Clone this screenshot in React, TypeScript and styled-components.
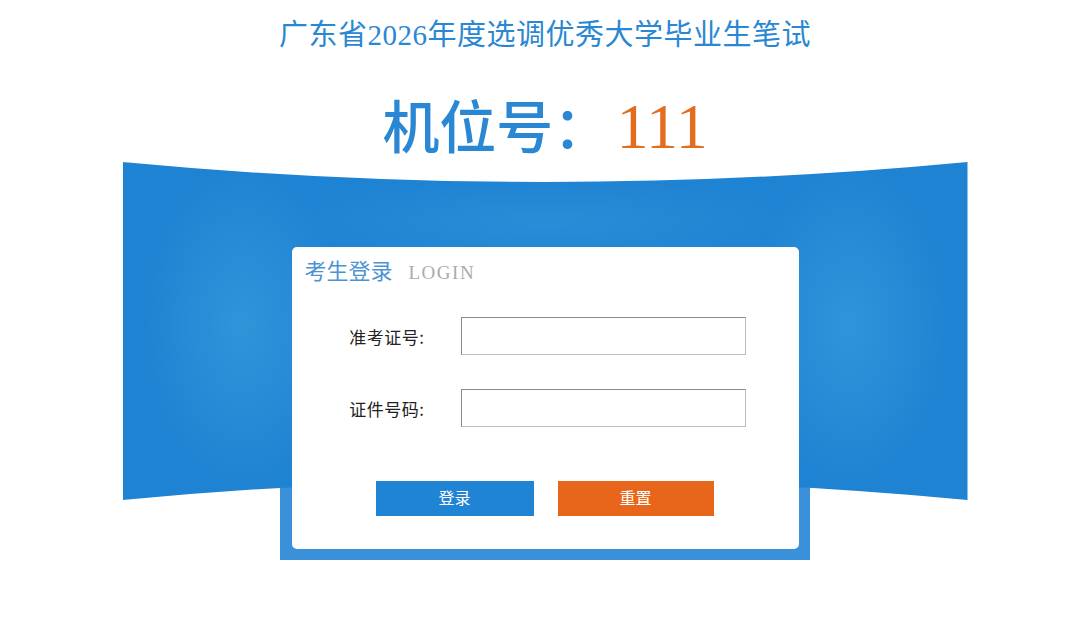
import React from "react";
import styled, { createGlobalStyle } from "styled-components";

const GlobalStyle = createGlobalStyle`
    html, body {
        margin: 0;
        padding: 0;
        background: #ffffff;
    }
    body {
        font-family: "Noto Sans CJK SC", "Liberation Sans", sans-serif;
        color: #333;
    }
`

const Page = styled.div`
    width: 1080px;
    padding-left: 10px;
    box-sizing: border-box;
    display: flex;
    flex-direction: column;
    align-items: center;
`

const Title = styled.h1`
    margin: 17px 0 0;
    height: 36px;
    line-height: 36px;
    font-size: 29px;
    font-weight: 400;
    color: #2a87d3;
    font-family: "Liberation Serif", "Noto Sans CJK SC", serif;
    letter-spacing: 0.5px;
`

const SeatLine = styled.div`
    margin-top: 37px;
    height: 70px;
    display: flex;
    align-items: baseline;
    line-height: 66px;
`

const SeatLabel = styled.span`
    font-size: 57px;
    font-weight: 500;
    color: #2a87d3;
    font-family: "Noto Sans CJK SC", sans-serif;
`

const SeatNumber = styled.span`
    margin-left: 6px;
    font-size: 64px;
    color: #e46c1f;
    font-family: "Liberation Serif", serif;
`

// banner, frame and card share one grid cell
const Stage = styled.div`
    width: 845px;
    height: 400px;
    display: grid;
    & > * {
        grid-area: 1 / 1;
    }
`

const Frame = styled.div`
    justify-self: center;
    align-self: end;
    width: 530px;
    height: 324px;
    background: #3a90d9;
`

const Banner = styled.div`
    height: 340px;
    align-self: start;
    background:
        radial-gradient(ellipse 100px 160px at 120px 165px, rgba(70, 170, 226, 0.45), rgba(70, 170, 226, 0) 100%),
        radial-gradient(ellipse 100px 160px at 725px 165px, rgba(70, 170, 226, 0.45), rgba(70, 170, 226, 0) 100%),
        radial-gradient(ellipse 260px 45px at 422px 62px, rgba(60, 160, 222, 0.35), rgba(60, 160, 222, 0) 100%),
        #1f83d3;
    clip-path: path("M0 2 Q422 42 845 2 L845 340 Q422 300 0 340 Z");
`

const Card = styled.div`
    position: relative;
    z-index: 1;
    justify-self: center;
    align-self: end;
    margin-bottom: 11px;
    width: 507px;
    height: 302px;
    box-sizing: border-box;
    padding: 8px 13px;
    background: #fff;
    border-radius: 5px;
`

const CardHead = styled.div`
    height: 28px;
    display: flex;
    align-items: baseline;
    line-height: 28px;
`

const HeadCn = styled.span`
    font-size: 22px;
    color: #4d93d3;
    font-family: "Noto Sans CJK SC", sans-serif;
`

const HeadEn = styled.span`
    margin-left: 16px;
    font-size: 19px;
    letter-spacing: 1.5px;
    color: #ababab;
    font-family: "Liberation Serif", serif;
`

const Form = styled.div`
    margin-top: 34px;
    display: grid;
    grid-template-columns: 120px 285px;
    column-gap: 36px;
    row-gap: 34px;
    align-items: center;
`

const Label = styled.label`
    text-align: right;
    font-size: 17px;
    letter-spacing: 0.5px;
    color: #222;
`

const Field = styled.input`
    width: 285px;
    height: 38px;
    box-sizing: border-box;
    border: 1px solid;
    border-color: #8a8a8a #bdbdbd #bdbdbd #8a8a8a;
    outline: none;
    padding: 0 6px;
    font-size: 15px;
`

const Actions = styled.div`
    margin: 54px 0 0 71px;
    display: flex;
    gap: 24px;
`

const Action = styled.button<{ $tone: "blue" | "orange" }>`
    width: ${p => (p.$tone === "blue" ? 158 : 156)}px;
    height: 35px;
    border: none;
    padding: 0 0 4px;
    background: ${p => (p.$tone === "blue" ? "#1f84d4" : "#e8661b")};
    color: #fff;
    font-size: 16px;
    font-family: "Noto Sans CJK SC", sans-serif;
    cursor: pointer;
`

const App = () => {
    return (
        <>
            <GlobalStyle />
            <Page>
                <Title>广东省2026年度选调优秀大学毕业生笔试</Title>
                <SeatLine>
                    <SeatLabel>机位号：</SeatLabel>
                    <SeatNumber>111</SeatNumber>
                </SeatLine>
                <Stage>
                    <Frame />
                    <Banner />
                    <Card>
                        <CardHead>
                            <HeadCn>考生登录</HeadCn>
                            <HeadEn>LOGIN</HeadEn>
                        </CardHead>
                        <Form>
                            <Label htmlFor="ticket">准考证号:</Label>
                            <Field id="ticket" type="text" />
                            <Label htmlFor="idcard">证件号码:</Label>
                            <Field id="idcard" type="text" />
                        </Form>
                        <Actions>
                            <Action $tone="blue">登录</Action>
                            <Action $tone="orange">重置</Action>
                        </Actions>
                    </Card>
                </Stage>
            </Page>
        </>
    )
}

export default App
